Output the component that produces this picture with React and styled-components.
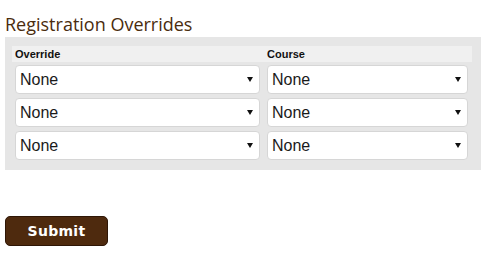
import { Fragment } from 'react'
import styled, { createGlobalStyle } from 'styled-components'

const GlobalStyle = createGlobalStyle`
  body {
    margin: 0;
    background: #fff;
    font-family: "Liberation Sans", Arial, sans-serif;
  }
`

const Page = styled.div`
  padding: 0 5px;
  width: 476px;
`

const Title = styled.h2`
  margin: 13px 0 2px;
  font-family: "Open Sans", "DejaVu Sans", sans-serif;
  font-weight: normal;
  font-size: 18px;
  line-height: 22px;
  color: #4a2c0e;
  letter-spacing: 0;
`

const Panel = styled.div`
  background: #e6e6e6;
  padding: 9px 9px 10px 7px;
`

const Grid = styled.div`
  display: grid;
  grid-template-columns: 252px 208px;
`

const HeadCell = styled.div`
  background: #f0f0f0;
  font-size: 11px;
  font-weight: bold;
  color: #111;
  height: 16px;
  line-height: 16px;
  padding-left: 3px;
`

const Cell = styled.div`
  padding: ${p => (p.$first ? '3px' : '4px')} 4px 0 3px;
`

const SelectWrap = styled.div`
  position: relative;
  height: 29px;
`

const Select = styled.select`
  appearance: none;
  width: 100%;
  height: 100%;
  box-sizing: border-box;
  border: 1px solid #d6d6d6;
  border-radius: 4px;
  background: #fff;
  font-family: "Liberation Sans", Arial, sans-serif;
  font-size: 16px;
  color: #1a1a1a;
  padding: 0 4px;
  outline: none;
`

const Arrow = styled.svg`
  position: absolute;
  right: 7px;
  top: 12px;
  pointer-events: none;
`

const Actions = styled.div`
  margin-top: 46px;
`

const SubmitButton = styled.button`
  width: 103px;
  height: 30px;
  background: #4e2a0e;
  border: 1px solid #2e1606;
  border-radius: 5px;
  color: #fff;
  font-family: "DejaVu Sans", Verdana, sans-serif;
  font-weight: bold;
  font-size: 14px;
  letter-spacing: 0.3px;
  cursor: pointer;
`

const DropDown = ({ first }) => (
  <Cell $first={first}>
    <SelectWrap>
      <Select defaultValue="none">
        <option value="none">None</option>
      </Select>
      <Arrow width="6" height="5" viewBox="0 0 6 5">
        <path d="M0 0 L6 0 L3 5 Z" fill="#111" />
      </Arrow>
    </SelectWrap>
  </Cell>
)

const App = () => {
  const rows = [0, 1, 2]

  return (
    <Page>
      <GlobalStyle />
      <Title>Registration Overrides</Title>
      <Panel>
        <Grid>
          <HeadCell>Override</HeadCell>
          <HeadCell>Course</HeadCell>
          {rows.map(i => (
            <Fragment key={i}>
              <DropDown first={i === 0} />
              <DropDown first={i === 0} />
            </Fragment>
          ))}
        </Grid>
      </Panel>
      <Actions>
        <SubmitButton>Submit</SubmitButton>
      </Actions>
    </Page>
  )
}

export default App
